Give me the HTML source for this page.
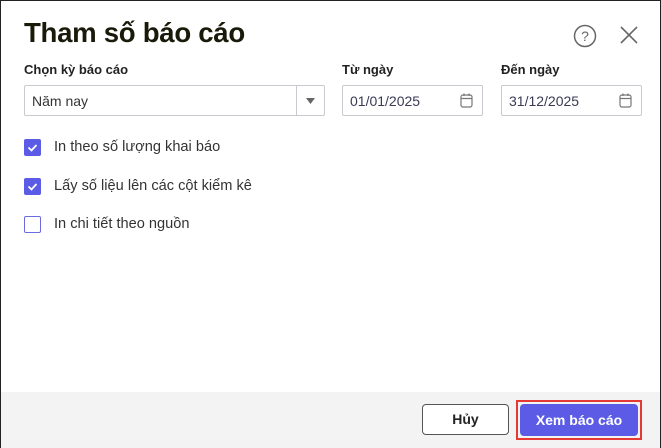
<!DOCTYPE html><html><head><meta charset="utf-8"><style>
*{box-sizing:border-box;margin:0;padding:0}
body{width:661px;height:448px;overflow:hidden;background:#fff;font-family:"Liberation Sans",sans-serif;position:relative}
.frame{position:absolute;inset:0;border:1px solid #222;border-bottom:none}
.abs{position:absolute}
h1{position:absolute;left:24px;top:17px;font-size:27.6px;font-weight:bold;color:#1a1a0a;letter-spacing:-0.3px}
.lbl{position:absolute;top:62px;font-size:13px;font-weight:bold;color:#222}
.box{position:absolute;top:85px;height:31px;border:1px solid #c9c9d0;border-radius:2px;font-size:14px;color:#333;padding:7px 0 0 7px}
.cb{position:absolute;left:24px;width:17px;height:17px;border-radius:2px}
.on{background:#5b5be6}
.off{border:1.5px solid #6b6be0;background:#fff}
.ct{position:absolute;left:54px;font-size:14.6px;color:#333}
.foot{position:absolute;left:1px;right:1px;top:392px;bottom:0;background:#f3f3f3}
</style></head><body>
<div class="frame"></div>
<h1>Tham số báo cáo</h1>
<svg class="abs" style="left:573px;top:24px" width="24" height="24"><circle cx="12" cy="12" r="10.5" fill="none" stroke="#666" stroke-width="1.5"/><text x="12" y="17" font-size="14" text-anchor="middle" fill="#666" font-family="Liberation Sans">?</text></svg>
<svg class="abs" style="left:619px;top:25px" width="20" height="20"><path d="M2 2L18 18M18 2L2 18" stroke="#666" stroke-width="1.6"/></svg>
<div class="lbl" style="left:24px">Chọn kỳ báo cáo</div>
<div class="lbl" style="left:342px">Từ ngày</div>
<div class="lbl" style="left:501px">Đến ngày</div>
<div class="box" style="left:24px;width:301px">Năm nay<div class="abs" style="left:271px;top:0;width:1px;height:29px;background:#c9c9d0"></div><svg class="abs" style="left:281px;top:11px" width="10" height="8"><path d="M0 1H9L4.5 7Z" fill="#666"/></svg></div>
<div class="box" style="left:342px;width:141px;color:#3a3a55">01/01/2025<svg class="abs" style="left:116px;top:6px" width="16" height="17"><rect x="2" y="3" width="11" height="12" rx="2" fill="none" stroke="#777" stroke-width="1.2"/><path d="M5 1.5V4M10 1.5V4M2 6.5H13" stroke="#777" stroke-width="1.2"/></svg></div>
<div class="box" style="left:501px;width:141px;color:#3a3a55">31/12/2025<svg class="abs" style="left:116px;top:6px" width="16" height="17"><rect x="2" y="3" width="11" height="12" rx="2" fill="none" stroke="#777" stroke-width="1.2"/><path d="M5 1.5V4M10 1.5V4M2 6.5H13" stroke="#777" stroke-width="1.2"/></svg></div>
<div class="cb on" style="top:139px"><svg width="17" height="17"><path d="M4.5 8.5L7.5 11.5L12.5 6" stroke="#fff" stroke-width="1.8" fill="none"/></svg></div>
<div class="ct" style="top:139px">In theo số lượng khai báo</div>
<div class="cb on" style="top:178px"><svg width="17" height="17"><path d="M4.5 8.5L7.5 11.5L12.5 6" stroke="#fff" stroke-width="1.8" fill="none"/></svg></div>
<div class="ct" style="top:178px">Lấy số liệu lên các cột kiểm kê</div>
<div class="cb off" style="top:216px"></div>
<div class="ct" style="top:216px">In chi tiết theo nguồn</div>
<div class="foot"></div>
<div class="abs" style="left:422px;top:404px;width:87px;height:31px;border:1px solid #555;border-radius:4px;background:#fff;font-size:14px;font-weight:bold;color:#222;text-align:center;line-height:29px">Hủy</div>
<div class="abs" style="left:516px;top:400px;width:126px;height:40px;border:2px solid #e53935"></div>
<div class="abs" style="left:520px;top:404px;width:118px;height:32px;border-radius:4px;background:#5b5be6;color:#fff;font-size:14px;font-weight:bold;text-align:center;line-height:32px">Xem báo cáo</div>
</body></html>
